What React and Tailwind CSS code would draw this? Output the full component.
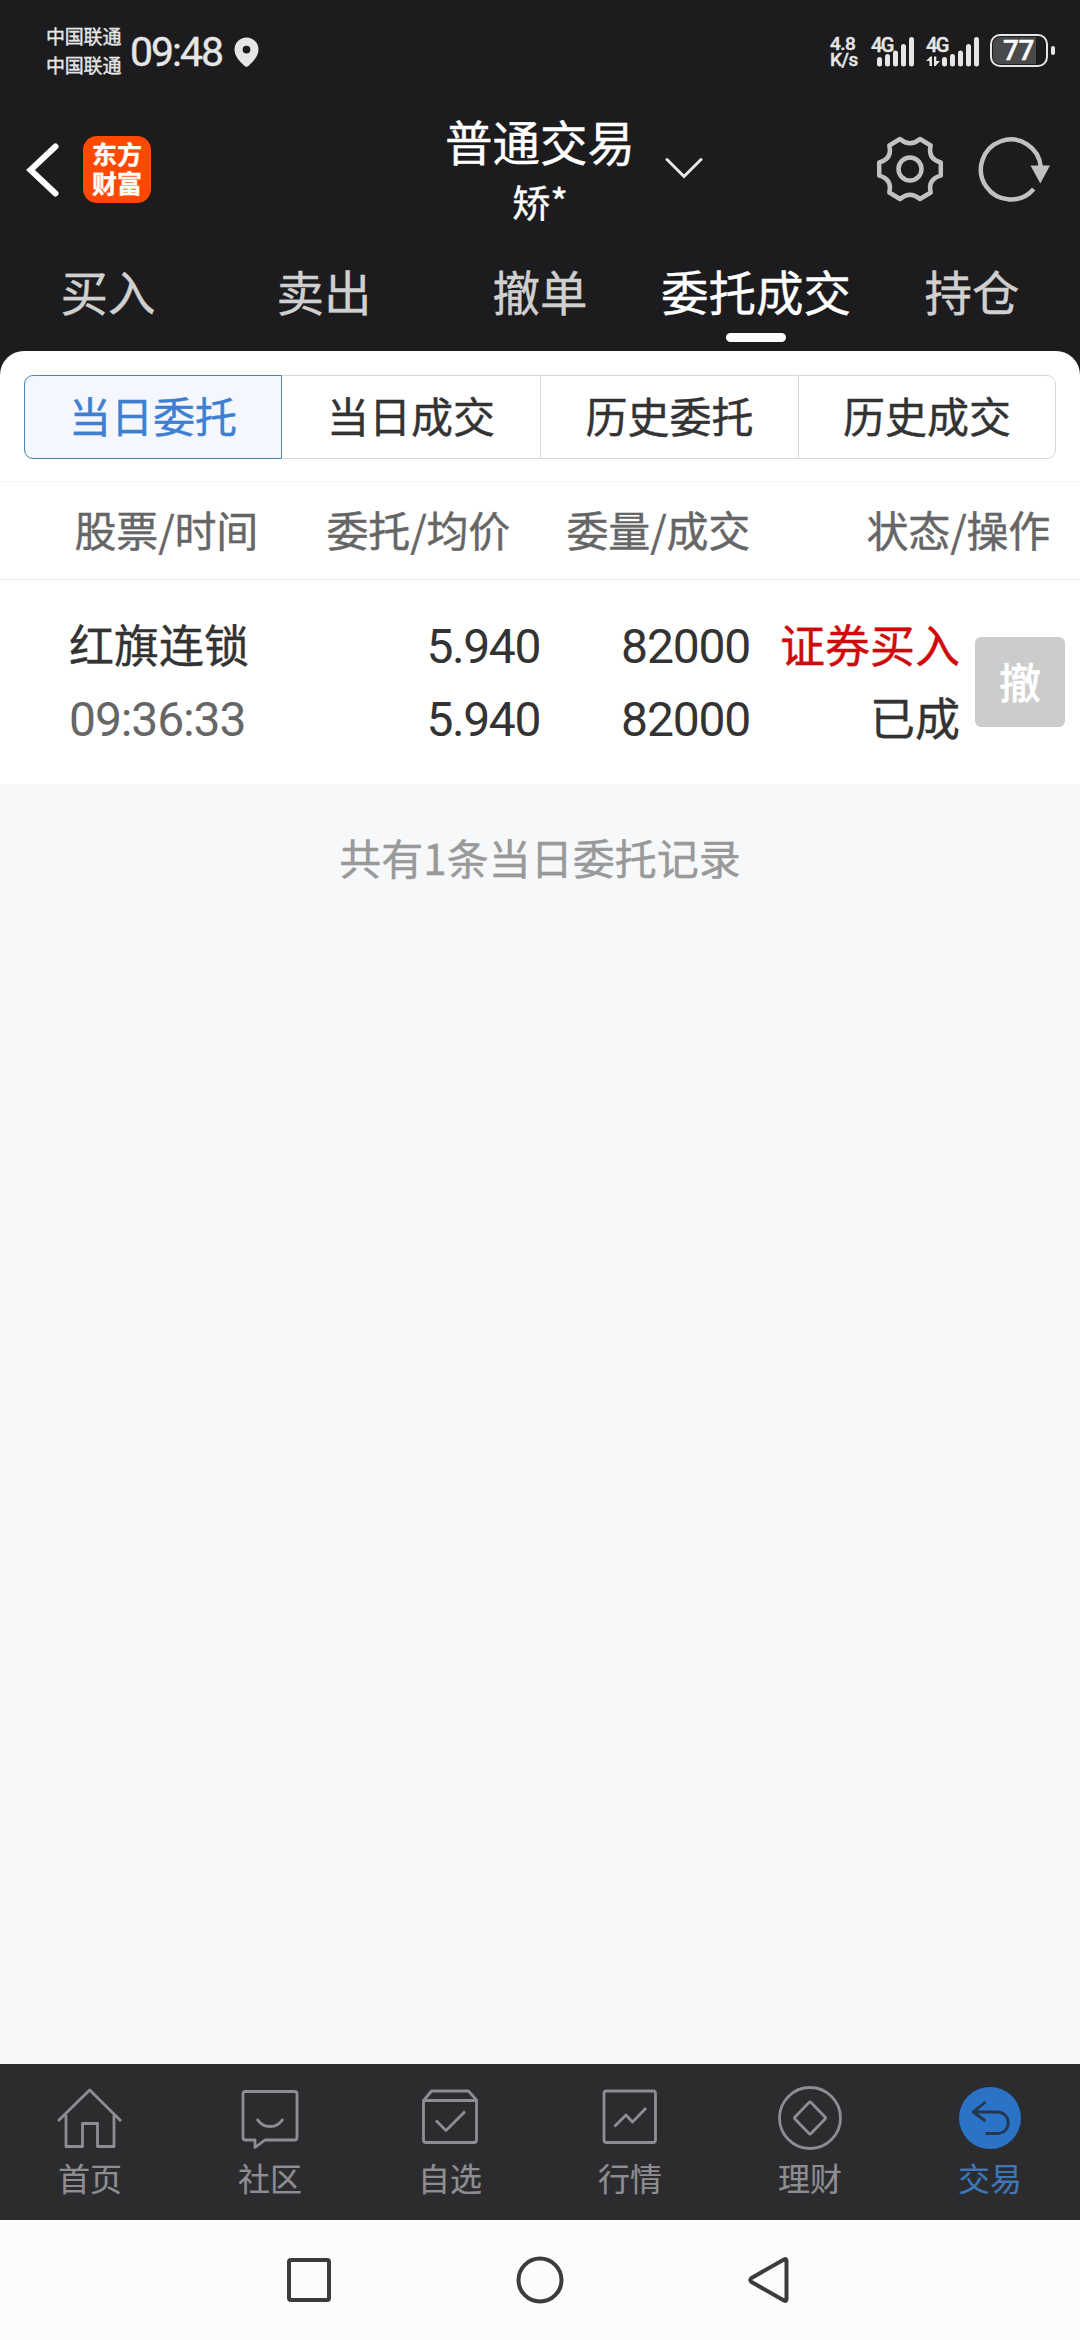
import React from "react";

const tabs = ["买入", "卖出", "撤单", "委托成交", "持仓"];
const segments = ["当日委托", "当日成交", "历史委托", "历史成交"];

function Signal({ className }) {
  return (
    <svg className={className} width="38" height="31" viewBox="0 0 38 31" fill="#e6e6e6">
      <rect x="0" y="21" width="5" height="9.500" rx="2.500" />
      <rect x="8" y="18" width="5" height="12.500" rx="2.500" />
      <rect x="16" y="14.500" width="5" height="16" rx="2.500" />
      <rect x="24" y="8" width="5" height="22.500" rx="2.500" />
      <rect x="32" y="1" width="5" height="29.500" rx="2.500" />
    </svg>
  );
}

function StatusBar() {
  return (
    <div className="flex h-[104px] items-start justify-between pl-[46px] pr-[25px] text-[#e6e6e6]">
      <div className="flex">
        <div className="mt-[21px] w-[76px] text-[19px] leading-[29px] tracking-[-0.2px]">
          <div className="h-[29px]">中国联通</div>
          <div className="h-[29px]">中国联通</div>
        </div>
        <div className="ml-[8px] mt-[32px] w-[96px] whitespace-nowrap font-[Roboto] text-[41px] leading-[41px] tracking-[-2px]">09:48</div>
        <svg className="ml-[8px] mt-[37px]" width="25" height="31" viewBox="0 0 25 31" fill="#e6e6e6" fillRule="evenodd">
          <path d="M12.500 0.500A12 12 0 0 0 0.500 12.500C0.500 19.500 6 24.500 10.300 28.700Q12.500 30.600 14.700 28.700C19 24.500 24.500 19.500 24.500 12.500A12 12 0 0 0 12.500 0.500ZM12.500 8.700A3.900 3.900 0 1 1 12.500 16.500A3.900 3.900 0 1 1 12.500 8.700Z" />
        </svg>
      </div>
      <div className="flex">
        <div className="mt-[36px] w-[34px] font-[Roboto] text-[19px] font-medium leading-[16px] tracking-[-0.5px]">
          <div>4.8</div>
          <div>K/s</div>
        </div>
        <div className="relative ml-[7px] mt-[35px] h-[31px] w-[46px]">
          <span className="absolute left-0 top-0 font-[Roboto] text-[20px] font-medium leading-[20px] tracking-[-1.5px]">4G</span>
          <Signal className="absolute left-[6px] top-[1px]" />
        </div>
        <div className="relative ml-[9px] mt-[35px] h-[31px] w-[56px]">
          <span className="absolute left-0 top-0 font-[Roboto] text-[20px] font-medium leading-[20px] tracking-[-1.5px]">4G</span>
          <svg className="absolute left-0 top-[21px]" width="14" height="11" viewBox="0 0 14 11" fill="#e6e6e6">
            <path d="M0 5L4.500 0.500H6V10H3.500V5ZM8 0.500H10.300V5H14L9.500 10H8Z" />
          </svg>
          <Signal className="absolute left-[16px] top-[1px]" />
        </div>
        <div className="relative ml-[8px] mt-[34px] flex h-[33px] w-[58px] items-center rounded-[10px] border-[2.500px] border-[#e6e6e6] p-px">
          <div className="h-full w-[43px] rounded-l-[7px] bg-[#4a4a4b]" />
          <span className="absolute left-0 right-[1px] top-[1px] text-center font-[Roboto] text-[28px] font-medium leading-[28px] tracking-[-0.5px] text-white">77</span>
        </div>
        <div className="ml-[3px] mt-[46px] h-[9px] w-[4px] rounded-full bg-[#e6e6e6]" />
      </div>
    </div>
  );
}

function Header() {
  return (
    <div className="flex h-[136px] items-start pl-[26px] pr-[28px]">
      <svg className="mt-[38px]" width="34" height="56" viewBox="0 0 34 56" fill="none" stroke="#fff" strokeWidth="6" strokeLinecap="round">
        <path d="M29.500 4.500L4.500 28L29.500 51.500" strokeLinejoin="miter" />
      </svg>
      <div className="ml-[23px] mt-[32px] flex h-[67px] w-[68px] flex-col items-center rounded-[14px] bg-[#ff4800] pt-[3px] text-[25px] font-bold leading-[29px] text-white">
        <div className="h-[29px]">东方</div>
        <div className="h-[29px]">财富</div>
      </div>
      <div className="ml-[289px] w-[200px] text-center text-white">
        <div className="mt-[7px] h-[60px] text-[47.500px] leading-[60px]">普通交易</div>
        <div className="mt-[6px] h-[48px] text-[38px] leading-[48px]">矫*</div>
      </div>
      <svg className="ml-[25px] mt-[52px]" width="38" height="24" viewBox="0 0 38 24" fill="none" stroke="#e8e8e8" strokeWidth="3" strokeLinecap="round">
        <path d="M2 3.500L19 20.500L36 3.500" />
      </svg>
      <svg className="ml-[173px] mt-[31px]" width="68" height="68" viewBox="-34 -34 68 68" fill="none" stroke="#c1c1c1" strokeWidth="4.500" strokeLinejoin="round">
        <path d="M10 -30L20.700 -23.500Q17.500 -10.100 30.800 -6.600V6.600Q17.500 10.100 20.700 23.500L10 30Q0 21.500 -10 30L-20.700 23.500Q-17.500 10.100 -30.800 6.600V-6.600Q-17.500 -10.100 -20.700 -23.500L-10 -30Q0 -21.500 10 -30Z" />
        <circle r="11.500" />
      </svg>
      <svg className="ml-[33px] mt-[31px]" width="74" height="68" viewBox="-34 -34 74 68" fill="none" stroke="#c1c1c1" strokeWidth="4.500">
        <path d="M22.700 20A30 30 0 1 1 29.800 -2" />
        <path d="M19.500 -3.500H39L29.300 14.500Z" fill="#c1c1c1" stroke="none" />
      </svg>
    </div>
  );
}

function Tabs() {
  return (
    <div className="grid h-[111px] grid-cols-5 text-[47.500px] leading-[60px] text-[#d0d0d0]">
      {tabs.map((t) => (
        <div key={t} className={t === "委托成交" ? "flex flex-col items-center text-white" : "flex flex-col items-center"}>
          <div className="mt-[21px] h-[60px] whitespace-nowrap">{t}</div>
          {t === "委托成交" && <div className="mt-[12px] h-[9px] w-[60px] rounded-full bg-white" />}
        </div>
      ))}
    </div>
  );
}

function Segments() {
  return (
    <div className="flex h-[131px] items-start border-b border-[#f5f5f5] px-[24px] pt-[24px]">
      {segments.map((s, i) => {
        const shape =
          i === 0
            ? "rounded-l-[9px] border border-[#4a84b4] bg-[#f4f8fe] text-[#3f7fd2]"
            : i === 3
              ? "rounded-r-[9px] border border-[#d6d8d8] text-[#333333]"
              : i === 1
                ? "border-y border-[#d6d8d8] text-[#333333]"
                : "border-y border-l border-[#d6d8d8] text-[#333333]";
        return (
          <div key={s} className={"flex h-[84px] w-[258px] justify-center pt-[9px] text-[42px] leading-[60px] " + shape}>
            {s}
          </div>
        );
      })}
    </div>
  );
}

function Orders() {
  return (
    <>
      <div className="flex h-[98px] border-b border-[#ebebeb] pt-[17px] text-[42px] leading-[60px] tracking-[-0.2px] text-[#666666]">
        <div className="w-[258px] text-right">股票/时间</div>
        <div className="w-[252px] text-right">委托/均价</div>
        <div className="w-[240px] text-right">委量/成交</div>
        <div className="w-[300px] text-right">状态/操作</div>
      </div>
      <div className="flex h-[204px] items-start pt-[29px] text-[45px] text-[#333333]">
        <div className="w-[270px] pl-[69px]">
          <div className="h-[73px] leading-[70px]">红旗连锁</div>
          <div className="h-[73px] whitespace-nowrap pt-[3px] font-[Roboto] text-[48px] leading-[70px] tracking-[-1.1px] text-[#666666] [-webkit-text-stroke:0]">09:36:33</div>
        </div>
        <div className="w-[270px] text-right font-[Roboto] text-[48px] leading-[70px] tracking-[-1.4px] [-webkit-text-stroke:0]">
          <div className="h-[73px] pt-[3px]">5.940</div>
          <div className="h-[73px] pt-[3px]">5.940</div>
        </div>
        <div className="w-[210px] text-right font-[Roboto] text-[48px] leading-[70px] tracking-[-1.2px] [-webkit-text-stroke:0]">
          <div className="h-[73px] pt-[3px]">82000</div>
          <div className="h-[73px] pt-[3px]">82000</div>
        </div>
        <div className="w-[210px] text-right leading-[70px]">
          <div className="h-[73px] text-[#d00a0a]">证券买入</div>
          <div className="h-[73px]">已成</div>
        </div>
        <button className="ml-[15px] mt-[28px] h-[90px] w-[90px] rounded-[6px] bg-[#cccccc] pb-[2px] text-center text-[42px] font-medium leading-[84px] text-white">撤</button>
      </div>
    </>
  );
}

const navIcons = {
  home: <path d="M-32 7L-0.300 -24L31 7M-24 1V32.500H-7.500V9.500H7.500V32.500H24V1" />,
  community: (
    <path d="M-25 -22.500H24.500Q27 -22.500 27 -20V23.500Q27 26 24.500 26H-5L-15 33.500V26H-24.500Q-27 26 -27 23.500V-20Q-27 -22.500 -24.500 -22.500M-13 5C-7 15 7 15 13 5" />
  ),
  watch: (
    <path d="M-26 -14L-18.500 -23H18.500L26.500 -14V26Q26.500 28.500 24 28.500H-24Q-26.500 28.500 -26.500 26V-13.500H26M-14 6.500L-4 16.500L15 -2.500" />
  ),
  market: (
    <>
      <rect x="-26" y="-23" width="51.500" height="51.500" rx="2.500" />
      <path d="M-15.500 12.500L-4 1L2.500 8L16 -6" />
    </>
  ),
  wealth: (
    <>
      <circle cx="0" cy="4" r="30.500" />
      <path d="M-1 -11.500Q0 -12.500 1 -11.500L15 3Q16 4 15 5L1 19.500Q0 20.500 -1 19.500L-15 5Q-16 4 -15 3Z" />
    </>
  ),
  trade: (
    <>
      <circle cx="0" cy="4" r="31" fill="#2b73c7" stroke="none" />
      <path stroke="#25354c" d="M-4.500 -12L-17 -2L-4.500 7M-17 -2H7C22 -2 22 19.500 7 19.500H-4.500" />
    </>
  ),
};

const navItems = [
  ["首页", "home"],
  ["社区", "community"],
  ["自选", "watch"],
  ["行情", "market"],
  ["理财", "wealth"],
  ["交易", "trade"],
];

function BottomNav() {
  return (
    <div className="grid h-[156px] grid-cols-6 bg-[#2c2c2e] text-[32px] leading-[44px] text-[#8e8e92] [-webkit-text-stroke:0.2px]">
      {navItems.map(([label, icon]) => (
        <div key={label} className={icon === "trade" ? "flex flex-col items-center text-[#3f76b8]" : "flex flex-col items-center"}>
          <svg className="mt-[14px]" width="80" height="76" viewBox="-40 -36 80 76" fill="none" stroke="#8e8e92" strokeWidth="2.800" strokeLinejoin="round">
            {navIcons[icon]}
          </svg>
          <div className="mt-[1px] h-[44px]">{label}</div>
        </div>
      ))}
    </div>
  );
}

function SystemBar() {
  return (
    <div className="flex h-[120px] items-center bg-[#fcfcfc] pl-[284px]">
      <svg width="50" height="50" viewBox="-25 -25 50 50" fill="none" stroke="#3c3c3c" strokeWidth="4">
        <rect x="-20" y="-20" width="40" height="40" rx="2" />
      </svg>
      <svg className="ml-[181px]" width="50" height="50" viewBox="-25 -25 50 50" fill="none" stroke="#3c3c3c" strokeWidth="4">
        <circle r="21.500" />
      </svg>
      <svg className="ml-[178px]" width="50" height="50" viewBox="-25 -25 50 50" fill="none" stroke="#3c3c3c" strokeWidth="4" strokeLinejoin="round">
        <path d="M18.500 -19V19Q18.500 22 16 20.500L-16.500 2Q-19 0 -16.500 -2L16 -20.500Q18.500 -22 18.500 -19Z" />
      </svg>
    </div>
  );
}

export default function App() {
  return (
    <div className="flex h-[2340px] w-[1080px] flex-col overflow-hidden bg-[#f7f8fa] font-['Noto_Sans_CJK_SC',sans-serif] [-webkit-text-stroke:0.4px]">
      <div className="bg-[#1c1c1e]">
        <StatusBar />
        <Header />
        <Tabs />
        <div className="rounded-t-[24px] bg-white">
          <Segments />
          <Orders />
        </div>
      </div>
      <div className="flex-1 pt-[43px] text-center text-[42px] leading-[60px] text-[#999999]">共有1条当日委托记录</div>
      <BottomNav />
      <SystemBar />
    </div>
  );
}
